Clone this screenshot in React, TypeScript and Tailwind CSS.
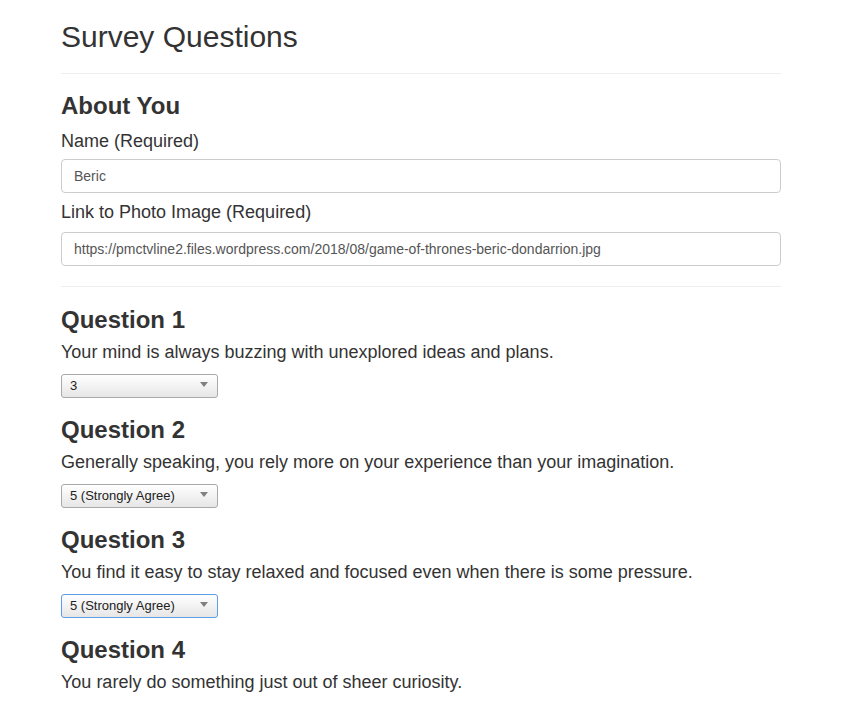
import React, { useState } from 'react';

const questions = [
  { text: 'Your mind is always buzzing with unexplored ideas and plans.', value: '3' },
  { text: 'Generally speaking, you rely more on your experience than your imagination.', value: '5' },
  { text: 'You find it easy to stay relaxed and focused even when there is some pressure.', value: '5', focused: true },
  { text: 'You rarely do something just out of sheer curiosity.', value: '1' },
];

const options = [
  { value: '1', label: '1 (Strongly Disagree)' },
  { value: '2', label: '2' },
  { value: '3', label: '3' },
  { value: '4', label: '4' },
  { value: '5', label: '5 (Strongly Agree)' },
];

function Select({ value, focused, onChange }: { value: string; focused?: boolean; onChange: (v: string) => void }) {
  return (
    <div className="relative mt-[9px] w-[157px] h-[24px]">
      <select
        value={value}
        onChange={(e) => onChange(e.target.value)}
        className={
          'appearance-none w-full h-full rounded-[3px] border bg-gradient-to-b from-white to-[#e6e6e6] pl-[8px] pr-[20px] text-[13px] text-[#222] outline-none ' +
          (focused ? 'border-[#5e9ee8]' : 'border-[#a9a9a9]')
        }
      >
        {options.map((o) => (
          <option key={o.value} value={o.value}>
            {o.label}
          </option>
        ))}
      </select>
      <svg className="absolute right-[10px] top-[9px] pointer-events-none" width="8" height="5" viewBox="0 0 8 5">
        <path d="M0 0 L8 0 L4 5 Z" fill="#808080" />
      </svg>
    </div>
  );
}

function App() {
  const [name, setName] = useState('Beric');
  const [photo, setPhoto] = useState('https://pmctvline2.files.wordpress.com/2018/08/game-of-thrones-beric-dondarrion.jpg');
  const [answers, setAnswers] = useState(questions.map((q) => q.value));

  return (
    <div className="min-h-screen bg-white text-[#333] pb-10" style={{ fontFamily: '"Liberation Sans", Arial, sans-serif' }}>
      <div className="w-[720px] mx-auto">
        <h2 className="pt-[20px] text-[30px] leading-[33px] font-normal">Survey Questions</h2>
        <hr className="mt-[20px] border-t border-[#eee]" />

        {/* About You */}
        <h3 className="mt-[19px] text-[24px] leading-[26px] font-bold">About You</h3>
        <label className="block mt-[10px] text-[18px] leading-[24px]">Name (Required)</label>
        <input
          value={name}
          onChange={(e) => setName(e.target.value)}
          className="block w-full mt-[6px] h-[34px] px-[12px] border border-[#ccc] rounded-[4px] text-[14px] text-[#555] outline-none"
        />
        <label className="block mt-[7px] text-[18px] leading-[24px]">Link to Photo Image (Required)</label>
        <input
          value={photo}
          onChange={(e) => setPhoto(e.target.value)}
          className="block w-full mt-[8px] h-[34px] px-[12px] border border-[#ccc] rounded-[4px] text-[14px] text-[#555] outline-none"
        />
        <hr className="mt-[20px] border-t border-[#eee]" />

        {/* Questions */}
        {questions.map((q, i) => (
          <div key={i} className="mt-[20px]">
            <h3 className="text-[24px] leading-[26px] font-bold">Question {i + 1}</h3>
            <p className="mt-[7px] text-[18px] leading-[24px]">{q.text}</p>
            <Select
              value={answers[i]}
              focused={q.focused}
              onChange={(v) => setAnswers(answers.map((a, j) => (j === i ? v : a)))}
            />
          </div>
        ))}
      </div>
    </div>
  );
}

export default App;
